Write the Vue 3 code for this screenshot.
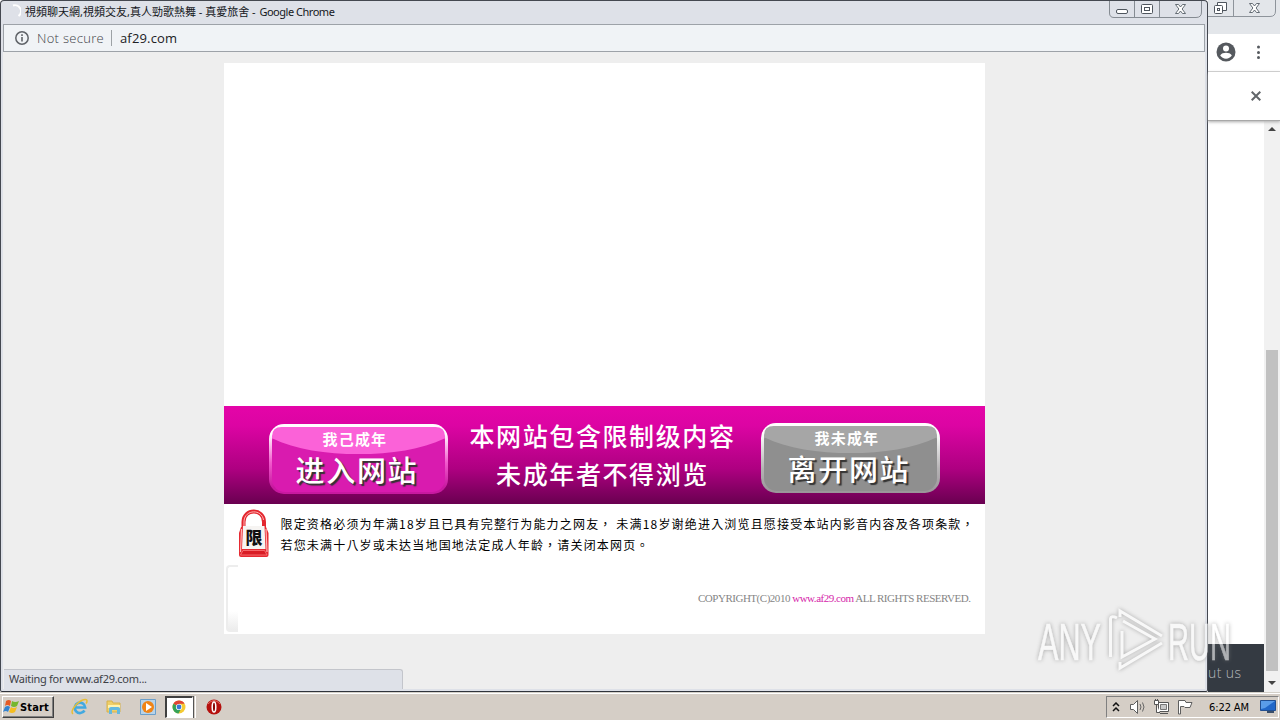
<template>
    <div class="desktop">
        <div class="back-window">
            <div class="back-caption">
                <svg class="back-controls" width="72" height="18" viewBox="0 0 72 18">
                    <path d="M0 16.500H62Q67.500 16.500 67.500 11V0M25.500 0V16" fill="none" stroke="#8e949b" />
                    <path d="M9.500 5V2.500H18.500V10.500H15" fill="#fff" stroke="#4e555d" />
                    <rect x="6.500" y="5.500" width="8" height="8" rx="1" fill="#fff" stroke="#4e555d" />
                    <rect x="9.500" y="8.500" width="2" height="2" fill="none" stroke="#4e555d" />
                    <path d="M41.500 3.500h3l2 2.500 2-2.500h3l-3.400 4.500 3.400 4.500h-3l-2-2.500-2 2.500h-3l3.400-4.500z" fill="#fff" stroke="#555d66" stroke-width=".9" />
                </svg>
            </div>
            <div class="back-toolbar">
                <svg width="20" height="20" viewBox="0 0 20 20">
                    <circle cx="10" cy="10" r="9.500" fill="#55595e" />
                    <circle cx="10" cy="6.500" r="3" fill="#fff" />
                    <path d="M4.200 13.500C5 11.400 8 10.800 10 10.800s5 .6 5.800 2.700C14.500 15.500 12.500 16.700 10 16.700S5.500 15.500 4.200 13.500z" fill="#fff" />
                </svg>
                <svg width="4" height="14" viewBox="0 0 4 14" fill="#55595e">
                    <circle cx="2.500" cy="2" r="1.500" /><circle cx="2.500" cy="7.500" r="1.500" /><circle cx="2.500" cy="12.500" r="1.500" />
                </svg>
            </div>
            <div class="back-infobar">
                <svg width="10" height="10" viewBox="0 0 10 10"><path d="M.7.7l8.600 8.600M9.300.7L.7 9.300" stroke="#62666a" stroke-width="2" /></svg>
            </div>
            <div class="back-body">
                <div class="back-page">
                    <div class="back-footer">ut us</div>
                </div>
                <div class="scrollbar">
                    <i class="arrow up"></i>
                    <i class="thumb"></i>
                    <i class="arrow down"></i>
                </div>
            </div>
        </div>

        <div class="window">
            <div class="caption">
                <svg class="spinner" width="14" height="14" viewBox="0 0 14 14"><path d="M6 1.500A6 6 0 0 1 11.500 12" fill="none" stroke="#fff" stroke-width="2" /></svg>
                <span class="caption-text">視頻聊天網,視頻交友,真人勁歌熱舞 - 真愛旅舍 - <span class="caption-app">Google Chrome</span></span>
                <svg class="controls" width="94" height="18" viewBox="0 0 94 18">
                    <path d="M.5 0V12Q.5 16.500 5 16.500H87Q92.500 16.500 92.500 11V0M25.500 0V16M50.500 0V16" fill="none" stroke="#858b92" />
                    <rect x="7.500" y="8.500" width="11" height="4" rx="1.500" fill="#fff" stroke="#4e555d" />
                    <rect x="32.500" y="3.500" width="11" height="9" rx="1" fill="#fff" stroke="#4e555d" />
                    <rect x="35.500" y="6.500" width="5" height="3" fill="none" stroke="#4e555d" />
                    <path d="M66.500 3.500h3l2 2.500 2-2.500h3l-3.400 4.500 3.400 4.500h-3l-2-2.500-2 2.500h-3l3.400-4.500z" fill="#fff" stroke="#555d66" stroke-width=".9" />
                </svg>
            </div>
            <div class="address">
                <svg width="14" height="14" viewBox="0 0 14 14">
                    <circle cx="7" cy="7" r="6.200" fill="none" stroke="#5f6368" stroke-width="1.500" />
                    <path d="M7 6v4.500M7 3.300v1.600" stroke="#5f6368" stroke-width="1.600" />
                </svg>
                <span class="insecure">Not secure</span>
                <i class="divider"></i>
                <span class="host">af29.com</span>
            </div>

            <div class="viewport">
                <div class="page">
                    <div class="blank"></div>
                    <div class="banner">
                        <button class="choice enter">
                            <svg class="gloss" width="173" height="28" viewBox="0 0 174 30" preserveAspectRatio="none"><path d="M0 12V10Q0 0 10 0H164Q174 0 174 10V12C150 24 120 29 87 29S24 24 0 12z" fill="#fb62d8" /></svg>
                            <span class="small">我己成年</span>
                            <span class="big">进入网站</span>
                        </button>
                        <div class="notice">
                            <div>本网站包含限制级内容</div>
                            <div>未成年者不得浏览</div>
                        </div>
                        <button class="choice leave">
                            <svg class="gloss" width="173" height="28" viewBox="0 0 174 30" preserveAspectRatio="none"><path d="M0 12V10Q0 0 10 0H164Q174 0 174 10V12C150 24 120 29 87 29S24 24 0 12z" fill="#a6a6a6" /></svg>
                            <span class="small">我未成年</span>
                            <span class="big">离开网站</span>
                        </button>
                    </div>
                    <div class="terms">
                        <svg class="lock" width="32" height="50" viewBox="0 0 32 50">
                            <path d="M5.500 19V13C5.500-1 26-1 26 13v6" fill="none" stroke="#e3262e" stroke-width="4" />
                            <path d="M6 17V12C7 0 24 0 25.500 11" fill="none" stroke="#ffb5b5" stroke-width="1" />
                            <path d="M3 18H28L30.500 24V46Q30.500 48 28.500 48H3Q1 48 1 46V24z" fill="#e62a32" />
                            <path d="M3.500 20L2.500 43M28 20l1 23" stroke="#ffb5b4" stroke-width="1.200" />
                            <path d="M5 17H26.500L27.500 40H4z" fill="#f6f4f2" />
                            <path d="M5 41.500H26.500L29 46H2.500z" fill="#d91d25" stroke="#ff8787" stroke-width=".7" />
                            <text x="16" y="35" text-anchor="middle" class="lock-text">限</text>
                        </svg>
                        <div class="terms-text">
                            <div>限定资格必须为年满18岁且已具有完整行为能力之网友， 未满18岁谢绝进入浏览且愿接受本站内影音内容及各项条款，</div>
                            <div>若您未满十八岁或未达当地国地法定成人年龄，请关闭本网页。</div>
                        </div>
                    </div>
                    <div class="bottom">
                        <div class="box-edge"></div>
                        <div class="copyright">COPYRIGHT(C)2010 <a>www.af29.com</a> ALL RIGHTS RESERVED.</div>
                    </div>
                </div>
            </div>
            <div class="status"><span>Waiting for www.af29.com...</span></div>
        </div>

        <svg class="watermark" width="200" height="66" viewBox="0 0 200 66">
            <path d="M74.500 50V12Q75 8 81 11M86 24V50L119 32L87 14M84 10V4L126 29M84 55V61L126 36" />
            <text x="2" y="53" textLength="63" lengthAdjust="spacingAndGlyphs">ANY</text>
            <text x="132" y="53" textLength="63" lengthAdjust="spacingAndGlyphs">RUN</text>
        </svg>

        <div class="taskbar">
            <div class="start">
                <svg width="17" height="16" viewBox="0 0 17 16">
                    <path d="M3 2Q6 0 8 2L7 7Q4 5 2 7z" fill="#e65b25" />
                    <path d="M9 2Q12 4 16 2L14 7Q11 9 8 7z" fill="#75b72d" />
                    <path d="M2 8Q5 6 7 8L5 13Q3 11 0 13z" fill="#3483cf" />
                    <path d="M8 8Q10 10 14 8L12 13Q9 15 6 13z" fill="#f5bd20" />
                </svg>
                <span>Start</span>
            </div>
            <div class="launch">
                <svg width="18" height="18" viewBox="0 0 18 18">
                    <path d="M13.500 12.500A5.200 5.200 0 1 1 14.200 9.500H5" fill="none" stroke="#42a9e0" stroke-width="2.600" />
                    <path d="M2 16C-2 13 8 2 14 1.500c3-.3 2 3 1 4" fill="none" stroke="#e8bd35" stroke-width="1.500" />
                </svg>
                <svg width="18" height="18" viewBox="0 0 18 18">
                    <path d="M2 3h5l1 2h7v9H2z" fill="#efcf68" stroke="#d6b24d" />
                    <path d="M3 7h12v3H3z" fill="#fff3ae" />
                    <path d="M4 16v-5q0-2 2-2h7q2 0 2 2v5h-3v-4H7v4z" fill="#64b9df" />
                </svg>
                <svg width="18" height="18" viewBox="0 0 18 18">
                    <path d="M1.500 1.500h15v15h-15z" fill="#b8d3e8" stroke="#6b9fca" />
                    <circle cx="9" cy="9" r="6" fill="#f08416" />
                    <path d="M7 5l6 4-6 4z" fill="#fff" />
                </svg>
            </div>
            <div class="running">
                <svg width="14" height="14" viewBox="0 0 14 14">
                    <circle cx="7" cy="7" r="6.500" fill="#f5ca32" />
                    <path d="M7 7L1.400 3.700A6.500 6.500 0 0 1 12.600 3.700H7z" fill="#df4435" />
                    <path d="M7 7L1.400 3.700A6.500 6.500 0 0 0 6.500 13.500L9 9z" fill="#36a257" />
                    <circle cx="7" cy="7" r="3.100" fill="#fff" />
                    <circle cx="7" cy="7" r="2.400" fill="#3978d4" />
                </svg>
            </div>
            <i class="running-edge"></i>
            <svg class="opera" width="16" height="16" viewBox="0 0 16 16">
                <circle cx="8" cy="8" r="7.500" fill="#b5100d" />
                <path d="M2 5Q8-2 14 5" fill="none" stroke="#e36b60" />
                <ellipse cx="8" cy="8" rx="1.800" ry="5" fill="#8a0705" stroke="#fff" stroke-width="1.500" />
            </svg>
            <div class="tray">
                <svg width="8" height="10" viewBox="0 0 8 10"><path d="M1 4l3-3 3 3M1 9l3-3 3 3" fill="none" stroke="#111" stroke-width="1.500" /></svg>
                <svg class="speaker" width="18" height="16" viewBox="0 0 18 16">
                    <path d="M1.500 5.500h3l4-4v13l-4-4h-3z" fill="#fff" stroke="#5e5e5e" />
                    <path d="M11 5q2 3 0 6M13.500 3.500q3 4.500 0 9" fill="none" stroke="#666" />
                </svg>
                <svg class="network" width="17" height="16" viewBox="0 0 17 16">
                    <path d="M5.500 3.500h10v9h-10zM7 14.500h8" fill="#fff" stroke="#555" />
                    <path d="M7.500 5.500h6v5h-6z" fill="#c8c8c8" stroke="#777" />
                    <path d="M1.500 1.500h4v4h-4zM3.500 5.500v8H7M2.500 0v2M4.500 0v2" fill="#fff" stroke="#555" />
                </svg>
                <svg class="flag" width="17" height="16" viewBox="0 0 17 16"><path d="M1.500 15V1.500H8l1 2h6l-2 5H8l-1-1H3.500V15z" fill="#fff" stroke="#5e5e5e" /></svg>
                <span class="clock">6:22 AM</span>
                <svg class="monitor" width="16" height="14" viewBox="0 0 16 14">
                    <path d="M.5.500h15v10H.5z" fill="#2167c8" stroke="#214f91" />
                    <path d="M1 1h14L5 8 1 9z" fill="#5a9ce8" />
                    <path d="M7 11h7v2H7z" fill="#394e69" />
                </svg>
            </div>
        </div>
    </div>
</template>

<script setup>
</script>

<style>
    body {
        overflow: hidden;
    }
</style>

<style scoped>
    .desktop {
        position: relative;
        width: 1280px;
        height: 720px;
        overflow: hidden;
        background: #fff;
        font-family: 'Noto Sans', 'Noto Sans CJK TC', sans-serif;
    }

    .desktop *, .desktop {
        box-sizing: border-box;
    }

    svg {
        display: block;
        flex: none;
    }

    /* window behind the popup */
    .back-window {
        position: absolute;
        left: 1208px;
        top: 0;
        width: 72px;
        height: 692px;
        display: flex;
        flex-direction: column;
    }

    .back-caption {
        height: 34px;
        background: #e3e6ea;
    }

    .back-toolbar {
        height: 38px;
        background: #fff;
        border-bottom: 1px solid #d4d4d4;
        display: flex;
        align-items: center;
        padding: 0 0 1px 8px;
        gap: 20px;
    }

    .back-infobar {
        height: 49px;
        background: #fff;
        border-bottom: 1px solid #a8a8a8;
        padding: 19px 0 0 43px;
        z-index: 1;
        box-shadow: 0 1px 3px #aaa;
    }

    .back-body {
        flex: 1;
        display: flex;
    }

    .back-page {
        width: 56px;
        display: flex;
        align-items: flex-end;
    }

    .back-footer {
        width: 56px;
        height: 48px;
        background: #343a42;
        color: #b4b8bc;
        font: 300 14px/58px 'Open Sans', sans-serif;
        letter-spacing: .4px;
    }

    .scrollbar {
        width: 16px;
        background: #f1f1f1;
        display: flex;
        flex-direction: column;
        align-items: center;
    }

    .arrow {
        border: 4px solid transparent;
    }

    .up {
        border-top: 0;
        border-bottom: 4px solid #444;
        margin-top: 6px;
    }

    .down {
        border-bottom: 0;
        border-top: 4px solid #444;
        margin-top: 10px;
    }

    .thumb {
        width: 12px;
        height: 321px;
        margin-top: 219px;
        background: #c1c1c1;
    }

    /* popup window */
    .window {
        position: absolute;
        left: 0;
        top: 0;
        width: 1208px;
        height: 692px;
        border: 1px solid #444850;
        border-bottom-color: #30343c;
        border-radius: 4px 4px 2px 2px;
        background: #dee1e8;
        padding: 0 2px 2px;
        display: flex;
        flex-direction: column;
    }

    .caption {
        height: 23px;
        display: flex;
        align-items: flex-start;
    }

    .spinner {
        margin: 3px 0 0 4px;
    }

    .caption-text {
        margin: 2px 0 0 4px;
        font-size: 11px;
        line-height: 18px;
        color: #15181c;
        white-space: nowrap;
    }

    .caption-app {
        margin-left: 1px;
        letter-spacing: -.48px;
    }

    .controls {
        margin-left: auto;
        margin-right: 2px;
    }

    .address {
        height: 28px;
        border: 1px solid #9da2a8;
        background: #f0f3f6;
        display: flex;
        align-items: center;
        padding-left: 11px;
        font-size: 14px;
        color: #202124;
    }

    .insecure {
        margin-left: 8px;
        width: 74px;
        font: 300 13px 'Open Sans', sans-serif;
        letter-spacing: .3px;
        color: #3e4247;
        white-space: nowrap;
    }

    .divider {
        width: 1px;
        height: 16px;
        background: #9da2a6;
    }

    .host {
        margin-left: 8px;
        font: 13px 'Open Sans', sans-serif;
        letter-spacing: .15px;
    }

    .viewport {
        flex: 1;
        background: #eee;
        display: flex;
        justify-content: center;
        padding-top: 11px;
        min-height: 0;
    }

    .page {
        width: 761px;
        height: 571px;
        background: #fff;
    }

    .blank {
        height: 343px;
    }

    .banner {
        height: 98px;
        display: flex;
        padding: 17px 45px 0;
        background: linear-gradient(#e405a8 0%, #dc04a3 20%, #ae0081 64%, #690050 100%);
    }

    .choice {
        position: relative;
        width: 179px;
        height: 70px;
        padding: 0;
        border: 0;
        border-radius: 15px;
        color: #fff;
        font-family: 'Noto Sans CJK SC', sans-serif;
    }

    .enter {
        margin-top: 1px;
        background: linear-gradient(#fff 0, #fff 14%, #f25acd 55%, #c819a0 90%);
    }

    .leave {
        background: linear-gradient(#fff 0, #fff 14%, #b6b3b5 65%, #9a9499 100%);
    }

    .choice::before {
        content: '';
        position: absolute;
        inset: 3px 3px 2px;
        border-radius: 13px;
        background: #d91baf;
    }

    .leave::before {
        background: #8f8f8f;
    }

    .gloss {
        position: absolute;
        left: 3px;
        top: 3px;
    }

    .small, .big {
        position: relative;
        display: block;
        text-align: left;
        white-space: nowrap;
    }

    .small {
        margin: 1px 0 0 54px;
        font-size: 15px;
        line-height: 20px;
        font-weight: 700;
        letter-spacing: 1.2px;
    }

    .big {
        margin: -1px 0 0 27px;
        font-size: 29px;
        line-height: 42px;
        font-weight: 500;
        letter-spacing: 1.7px;
        text-shadow: 2px 2px 1px #333;
    }

    .notice {
        width: 313px;
        padding-right: 3px;
        text-align: center;
        color: #fff;
        font: 500 25px/38px 'Noto Sans CJK SC', sans-serif;
        letter-spacing: 1.6px;
        margin-top: -7px;
    }

    .terms {
        height: 60px;
        display: flex;
        padding: 5px 0 0 14px;
    }

    .lock-text {
        font: 900 17px 'Noto Sans CJK SC', sans-serif;
        fill: #111;
    }

    .terms-text {
        margin: 4px 0 0 11px;
        font: 12px/21px 'Noto Sans CJK TC', sans-serif;
        letter-spacing: 1.18px;
        color: #000;
        white-space: nowrap;
    }

    .bottom {
        height: 70px;
        display: flex;
        padding: 1px 14px 0 2px;
    }

    .box-edge {
        width: 12px;
        height: 67px;
        border: 2px solid #ededed;
        border-right: 0;
        border-radius: 4px 0 0 4px;
        background: linear-gradient(#fff 70%, #ececec);
    }

    .copyright {
        margin: 26px 0 0 auto;
        font: 11px/14px 'Liberation Serif', serif;
        letter-spacing: -.48px;
        color: #858585;
        white-space: nowrap;
    }

    .copyright a {
        color: #d526aa;
    }

    .status {
        position: absolute;
        left: 3px;
        bottom: 2px;
        width: 399px;
        height: 20px;
        padding-left: 5px;
        border: 1px solid #c3c5cb;
        border-left: 0;
        border-bottom: 0;
        border-radius: 0 3px 0 0;
        background: #dee1e8;
        color: #3c4046;
        font: 11px/18px 'Noto Sans', sans-serif;
        letter-spacing: -.27px;
    }

    .watermark {
        position: absolute;
        left: 1036px;
        top: 607px;
        overflow: visible;
        fill: none;
        stroke: #fff;
        stroke-width: 3;
        opacity: .6;
        filter: drop-shadow(0 0 2px #777);
    }

    .watermark text {
        font: 52px 'Liberation Sans', sans-serif;
        fill: #fff;
        stroke-width: .6;
    }

    /* classic taskbar */
    .taskbar {
        position: absolute;
        left: 0;
        top: 692px;
        width: 1280px;
        height: 28px;
        padding: 3px 1px 1px 2px;
        border-top: 1px solid #d4d0c8;
        box-shadow: inset 0 1px #fff;
        background: #d5cec6;
        display: flex;
    }

    .start {
        width: 52px;
        height: 22px;
        border: 1px solid #fff;
        border-right-color: #404040;
        border-bottom-color: #404040;
        box-shadow: inset -1px -1px #808080;
        display: flex;
        align-items: center;
        padding-left: 0;
        font: bold 11px 'DejaVu Sans Condensed', sans-serif;
        letter-spacing: .15px;
        color: #000;
    }

    .launch {
        display: flex;
        gap: 16px;
        padding: 2px 0 0 17px;
        margin-right: 8px;
    }

    .running {
        width: 28px;
        height: 22px;
        border: 1px solid #fff;
        border-top: 2px solid #404040;
        border-left: 2px solid #404040;
        background: #fff;
        padding: 2px 0 0 5px;
    }

    .running-edge {
        width: 3px;
        height: 22px;
        border-left: 1px solid #555;
        border-right: 1px solid #fff;
    }

    .opera {
        margin: 3px 0 0 10px;
    }

    .tray {
        margin-left: auto;
        width: 173px;
        height: 22px;
        border: 1px solid #fff;
        border-top-color: #808080;
        border-left-color: #808080;
        display: flex;
        align-items: center;
        padding-left: 5px;
    }

    .speaker {
        margin-left: 9px;
    }

    .network {
        margin-left: 6px;
    }

    .flag {
        margin-left: 7px;
    }

    .clock {
        margin-left: 15px;
        width: 50px;
        font: 11px 'DejaVu Sans Condensed', sans-serif;
        letter-spacing: -.1px;
        color: #000;
        white-space: nowrap;
    }

    .monitor {
        margin-left: 1px;
    }
</style>
